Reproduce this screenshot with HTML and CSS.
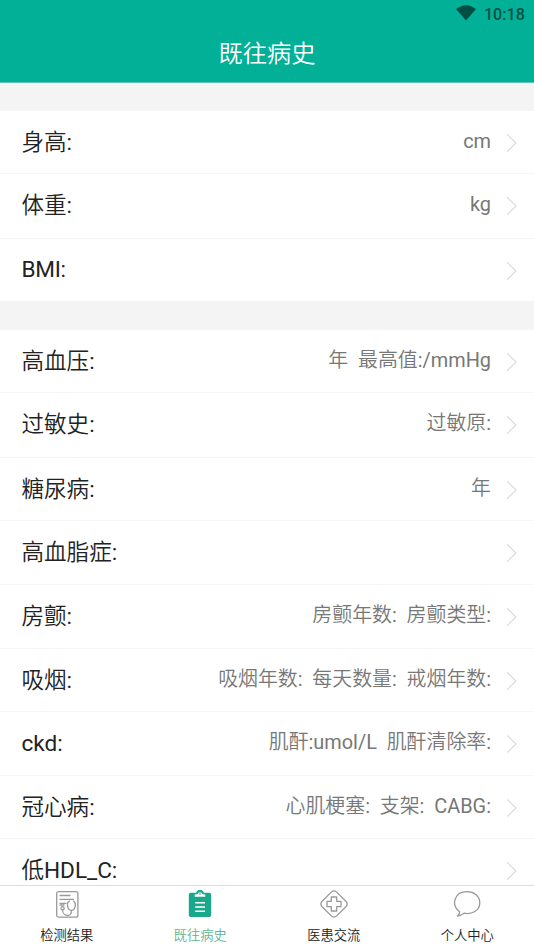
FILE: index.html
```html
<!DOCTYPE html>
<html lang="zh-CN">
<head>
<meta charset="utf-8">
<title>既往病史</title>
<link rel="stylesheet" href="styles.css">
</head>
<body>
<svg class="defs" width="0" height="0"><symbol id="chev" viewBox="0 0 12 20"><path d="M1.2 1.4 10 10 1.2 18.6"/></symbol></svg>
<div class="app">
<header class="header">
<div class="status"><svg class="wifi" width="20" height="16" viewBox="0 0 20 16"><path d="M0 4Q10-3.6 20 4L10 15.6Z"/></svg><span>10:18</span></div>
<h1>既往病史</h1>
</header>
<main class="content">
<section class="group">
<div class="row"><span class="label">身高:</span><span class="value">cm</span><svg class="chev"><use href="#chev"/></svg></div>
<div class="row tall"><span class="label">体重:</span><span class="value">kg</span><svg class="chev"><use href="#chev"/></svg></div>
<div class="row last"><span class="label">BMI:</span><span class="value"></span><svg class="chev"><use href="#chev"/></svg></div>
</section>
<section class="group">
<div class="row"><span class="label">高血压:</span><span class="value">年&nbsp; 最高值:/mmHg</span><svg class="chev"><use href="#chev"/></svg></div>
<div class="row tall"><span class="label">过敏史:</span><span class="value">过敏原:</span><svg class="chev"><use href="#chev"/></svg></div>
<div class="row"><span class="label">糖尿病:</span><span class="value">年</span><svg class="chev"><use href="#chev"/></svg></div>
<div class="row mid"><span class="label">高血脂症:</span><span class="value"></span><svg class="chev"><use href="#chev"/></svg></div>
<div class="row mid"><span class="label">房颤:</span><span class="value">房颤年数:&nbsp; 房颤类型:</span><svg class="chev"><use href="#chev"/></svg></div>
<div class="row"><span class="label">吸烟:</span><span class="value">吸烟年数:&nbsp; 每天数量:&nbsp; 戒烟年数:</span><svg class="chev"><use href="#chev"/></svg></div>
<div class="row mid"><span class="label">ckd:</span><span class="value">肌酐:umol/L&nbsp; 肌酐清除率:</span><svg class="chev"><use href="#chev"/></svg></div>
<div class="row"><span class="label">冠心病:</span><span class="value">心肌梗塞:&nbsp; 支架:&nbsp; CABG:</span><svg class="chev"><use href="#chev"/></svg></div>
<div class="row"><span class="label">低HDL_C:</span><span class="value"></span><svg class="chev"><use href="#chev"/></svg></div>
</section>
</main>
<nav class="tabs">
<div class="tab"><svg class="icon" viewBox="0 0 28 28"><rect x="3.700" y="1.600" width="21.200" height="25.600" rx="2"/><path d="M6.500 5.500h11M6.500 9.300h14.500M6.500 13.300h7M6.500 15h5"/><circle cx="9.600" cy="18.200" r="1.600"/><path d="M9.600 19.800C9.500 27 19.200 27.500 18.400 20.500M17 11.200c-3.600-.5-3.500 8.800 1.400 9.300 4.900-.5 5-9.800 1.400-9.300"/></svg><span>检测结果</span></div>
<div class="tab active"><svg class="icon" viewBox="0 0 28 28"><rect class="solid" x="2.800" y="2.700" width="22.400" height="24.300" rx="2"/><circle class="solid" cx="14" cy="3.800" r="3.900"/><path class="clip" d="M8.700 6.700V5.300q0-1 1-1h1.800a2.550 2.550 0 0 1 5 0h1.800q1 0 1 1v1.400Z"/><circle class="solid" cx="14" cy="3.900" r=".8"/><path class="white" d="M9.200 12.700h9.800M9.200 17h9.800M9.200 21.300h9.800"/></svg><span>既往病史</span></div>
<div class="tab"><svg class="icon" viewBox="0 0 28 28"><path d="M11.500 1.900q2.500-2 5 0l9.600 9.600q2 2.500 0 5l-9.600 9.600q-2.500 2-5 0l-9.600-9.600q-2-2.500 0-5Z"/><path d="M11.300 7h5.400v4.300H21v5.400h-4.300V21h-5.400v-4.300H7v-5.400h4.300Z"/></svg><span>医患交流</span></div>
<div class="tab"><svg class="icon" viewBox="0 0 28 28"><path d="M6.700 22C-2.300 15 1 1.700 14 1.700c7 0 12.800 4.600 12.800 11 0 8-8 12-15.800 10.500-2 1.500-4.500 2.700-6.600 2.800 1.200-.8 2.200-2.200 2.300-4Z"/></svg><span>个人中心</span></div>
</nav>
</div>
</body>
</html>
```

FILE: styles.css
```css
* { box-sizing: border-box; }
body { margin: 0; font-family: Roboto, "Noto Sans CJK SC DemiLight", "Noto Sans CJK SC", sans-serif; background: #f4f4f4; }
.defs { display: block; height: 0; }
.app { height: 949px; display: flex; flex-direction: column; overflow: hidden; }
.header { flex: none; height: 83px; background: #02b098; border-bottom: 1px solid #5bc6b7; color: #fff; }
.status { height: 28px; padding: 0 9px 0 0; display: flex; justify-content: flex-end; align-items: center; gap: 8px; color: #014f44; font-size: 16px; font-weight: 500; letter-spacing: .1px; }
.wifi { fill: #014f44; margin-top: -3px; }
h1 { margin: 0; font-size: 24.3px; line-height: 52px; font-weight: 350; text-align: center; }
.content { flex: 1; min-height: 0; overflow: hidden; }
.group { margin-top: 28px; background: #fff; }
.group + .group { margin-top: 29px; }
.row { height: 63px; display: flex; align-items: flex-start; padding: 0 16px 0 21.5px; border-bottom: 1px solid #f5f5f5; white-space: nowrap; }
.row.mid { height: 64px; }
.row.tall { height: 65px; }
.row.last { height: 62px; border: 0; }
.label { font-size: 22.6px; line-height: 64px; color: #222; font-weight: 400; letter-spacing: -.05px; }
.row.last .label { line-height: 62px; letter-spacing: -.3px; }
.value { flex: 1; text-align: right; font-size: 19.9px; line-height: 62px; color: #777; font-weight: 400; }
.chev { width: 12px; height: 20px; margin: 22px 0 0 15px; fill: none; stroke: #d8d8d8; stroke-width: 1.1; }
.tabs { flex: none; height: 64px; display: grid; grid-template-columns: repeat(4, 1fr); background: #fff; border-top: 1px solid #ddd; }
.tab { display: flex; flex-direction: column; align-items: center; padding-top: 4px; font-size: 13.3px; font-weight: 350; line-height: 20px; gap: 8px; color: #222; }
.tab.active { color: #5fb591; }
.icon { width: 28px; height: 28px; fill: none; stroke: #999; stroke-width: 1.3; stroke-linejoin: round; }
.icon .solid { fill: #1aa88c; stroke: none; }
.icon .clip { fill: #fff; stroke: none; }
.icon .white { stroke: #fff; stroke-width: 1.4; }
```
